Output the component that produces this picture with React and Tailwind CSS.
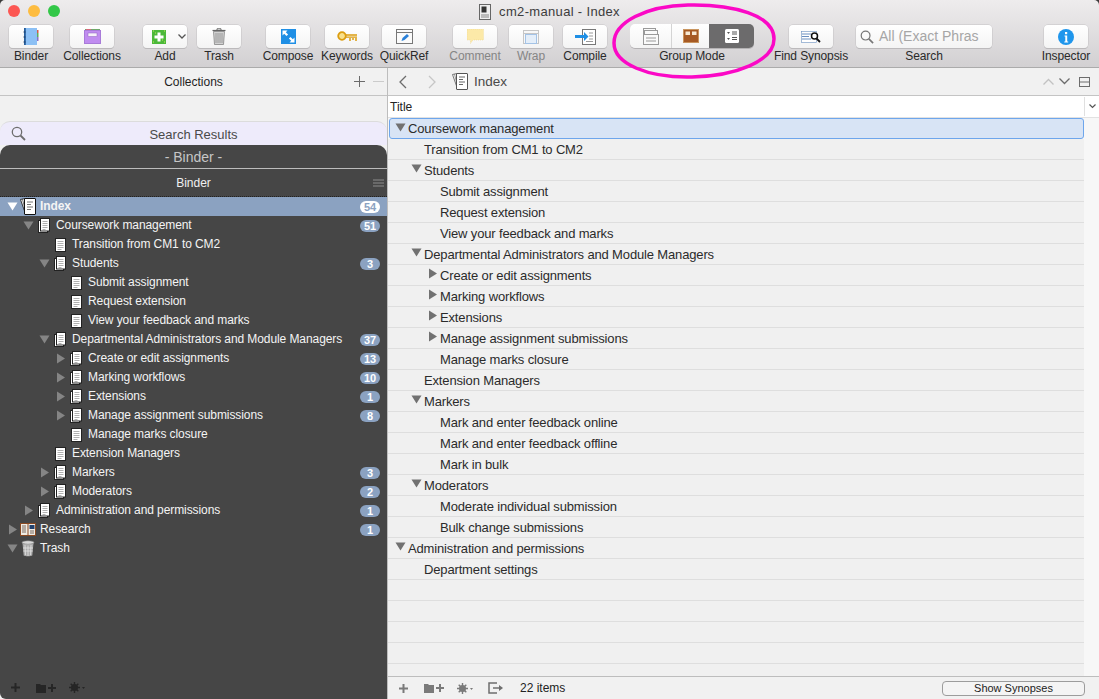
import React from 'react';

const binderRows = [
  { label: 'Index', depth: 0, arrow: 'down', icon: 'index', badge: 54, selected: true },
  { label: 'Coursework management', depth: 1, arrow: 'down', icon: 'stack', badge: 51 },
  { label: 'Transition from CM1 to CM2', depth: 2, icon: 'doc' },
  { label: 'Students', depth: 2, arrow: 'down', icon: 'stack', badge: 3 },
  { label: 'Submit assignment', depth: 3, icon: 'doc' },
  { label: 'Request extension', depth: 3, icon: 'doc' },
  { label: 'View your feedback and marks', depth: 3, icon: 'doc' },
  { label: 'Departmental Administrators and Module Managers', depth: 2, arrow: 'down', icon: 'stack', badge: 37 },
  { label: 'Create or edit assignments', depth: 3, arrow: 'right', icon: 'stack', badge: 13 },
  { label: 'Marking workflows', depth: 3, arrow: 'right', icon: 'stack', badge: 10 },
  { label: 'Extensions', depth: 3, arrow: 'right', icon: 'stack', badge: 1 },
  { label: 'Manage assignment submissions', depth: 3, arrow: 'right', icon: 'stack', badge: 8 },
  { label: 'Manage marks closure', depth: 3, icon: 'doc' },
  { label: 'Extension Managers', depth: 2, icon: 'doc' },
  { label: 'Markers', depth: 2, arrow: 'right', icon: 'stack', badge: 3 },
  { label: 'Moderators', depth: 2, arrow: 'right', icon: 'stack', badge: 2 },
  { label: 'Administration and permissions', depth: 1, arrow: 'right', icon: 'stack', badge: 1 },
  { label: 'Research', depth: 0, arrow: 'right', icon: 'research', badge: 1 },
  { label: 'Trash', depth: 0, arrow: 'down', icon: 'trash' },
];

const outlineRows = [
  { label: 'Coursework management', depth: 0, arrow: 'down', active: true },
  { label: 'Transition from CM1 to CM2', depth: 1 },
  { label: 'Students', depth: 1, arrow: 'down' },
  { label: 'Submit assignment', depth: 2 },
  { label: 'Request extension', depth: 2 },
  { label: 'View your feedback and marks', depth: 2 },
  { label: 'Departmental Administrators and Module Managers', depth: 1, arrow: 'down' },
  { label: 'Create or edit assignments', depth: 2, arrow: 'right' },
  { label: 'Marking workflows', depth: 2, arrow: 'right' },
  { label: 'Extensions', depth: 2, arrow: 'right' },
  { label: 'Manage assignment submissions', depth: 2, arrow: 'right' },
  { label: 'Manage marks closure', depth: 2 },
  { label: 'Extension Managers', depth: 1 },
  { label: 'Markers', depth: 1, arrow: 'down' },
  { label: 'Mark and enter feedback online', depth: 2 },
  { label: 'Mark and enter feedback offline', depth: 2 },
  { label: 'Mark in bulk', depth: 2 },
  { label: 'Moderators', depth: 1, arrow: 'down' },
  { label: 'Moderate individual submission', depth: 2 },
  { label: 'Bulk change submissions', depth: 2 },
  { label: 'Administration and permissions', depth: 0, arrow: 'down' },
  { label: 'Department settings', depth: 1 },
  {}, {}, {}, {}, {}, {},
];

function Arrow({ dir, color }) {
  return (
    <svg width="11" height="11" viewBox="0 0 11 11" fill={color}>
      {dir === 'down' ? <path d="M0.5 1.5h10L5.5 9.5z" /> : <path d="M2 0.5v10l8-5z" />}
    </svg>
  );
}

function DocIcon() {
  return (
    <svg width="11" height="14" viewBox="0 0 11 14">
      <rect x="0.500" y="0.500" width="10" height="13" fill="#fff" stroke="#222" />
      <path d="M2.500 3.500h6M2.500 5.500h6M2.500 7.500h6M2.500 9.500h6M2.500 11.500h4" stroke="#b0b0b0" />
    </svg>
  );
}

function StackIcon() {
  return (
    <svg width="12" height="15" viewBox="0 0 12 15">
      <rect x="0.500" y="2.500" width="9" height="12" fill="#fff" stroke="#222" />
      <rect x="2.500" y="0.500" width="9" height="12.500" fill="#fff" stroke="#222" />
      <path d="M4.500 3.500h5M4.500 5.500h5M4.500 7.500h5M4.500 9.500h5M4.500 11.500h3" stroke="#b0b0b0" />
    </svg>
  );
}

function IndexIcon({ light }) {
  const line = light ? '#666' : '#777';
  const edge = light ? '#555' : '#111';
  return (
    <svg width="16" height="17" viewBox="0 0 16 17">
      <path d="M0.500 1.500l4.500-1 3 13-3 .8z" fill="#fff" stroke={edge} strokeWidth="0.800" />
      <path d="M2.500 1.200l3 12" stroke={edge} strokeWidth="0.600" />
      <rect x="4.500" y="0.500" width="11" height="16" rx="0.500" fill="#fff" stroke={edge} />
      <path d="M7 4h6M7 6.500h4M7 9h6M7 11.500h4" stroke={line} />
    </svg>
  );
}

function ResearchIcon() {
  return (
    <svg width="16" height="13" viewBox="0 0 16 13">
      <rect x="0.500" y="0.500" width="15" height="12" fill="#f0ece4" stroke="#8a4a22" />
      <path d="M8 1v11" stroke="#8a4a22" />
      <rect x="9.500" y="2" width="5" height="4" fill="#23426e" />
      <path d="M2 3h4M2 5h4M2 7h4M2 9h4M10 8h4M10 10h4" stroke="#7a6a60" />
    </svg>
  );
}

function TrashSmall() {
  return (
    <svg width="14" height="17" viewBox="0 0 14 17">
      <ellipse cx="7" cy="2.500" rx="6" ry="1.800" fill="#d8d8d8" stroke="#777" strokeWidth="0.600" />
      <path d="M1.500 3l1.200 12.500c1 1 7.600 1 8.600 0L12.500 3c-2 1.200-9 1.200-11 0z" fill="#aaa" />
      <path d="M4 5l.5 10M7 5.500V16M10 5l-.5 10M2 8h10M2.300 11h9.400" stroke="#e4e4e4" strokeWidth="0.800" />
    </svg>
  );
}

function RowIcon({ type }) {
  if (type === 'index') return <IndexIcon />;
  if (type === 'stack') return <StackIcon />;
  if (type === 'research') return <ResearchIcon />;
  if (type === 'trash') return <TrashSmall />;
  return <DocIcon />;
}

// Small toolbar glyphs
const BinderGlyph = () => (
  <svg width="16" height="17" viewBox="0 0 16 17">
    <path d="M13 2h2.500v3H13z" fill="#d65a4a" />
    <path d="M13 5h2.500v4H13z" fill="#5fae5a" />
    <path d="M13 9h2.500v4H13z" fill="#8a70c8" />
    <rect x="1" y="0" width="13" height="17" fill="#8cc0f5" />
    <rect x="1" y="0" width="1.800" height="17" fill="#255d9c" />
    <path d="M0.500 4h2M0.500 9h2M0.500 14h2" stroke="#1c3f69" />
  </svg>
);

const CollectionsGlyph = () => (
  <svg width="17" height="15" viewBox="0 0 17 15">
    <path d="M1 0h15v2H1z" fill="#6fa86a" />
    <path d="M2 0h5v2H2z" fill="#d9687c" />
    <rect x="0.500" y="1.500" width="16" height="13" fill="#c08cf0" stroke="#a87bd8" />
    <rect x="4" y="4" width="9" height="3.500" fill="#f7f0fb" stroke="#8d62bd" strokeWidth="0.500" />
  </svg>
);

const AddGlyph = () => (
  <svg width="14" height="14" viewBox="0 0 14 14">
    <rect width="14" height="14" fill="#4cb93a" />
    <path d="M7 2.500v9M2.500 7h9" stroke="#fff" strokeWidth="3" />
    <path d="M1 1h1M12 1h1M1 12h1M12 12h1M3 3h1M10 10h1" stroke="#cfe65a" />
  </svg>
);

const TrashGlyph = () => (
  <svg width="14" height="17" viewBox="0 0 14 17">
    <path d="M0.500 2.500h13" stroke="#666" strokeWidth="1.200" />
    <path d="M5 2V0.800h4V2" fill="none" stroke="#666" />
    <path d="M1.500 3.500h11l-1 13h-9z" fill="#d2d2d2" stroke="#777" strokeWidth="0.700" />
    <path d="M4 5v10M6 5v10M8 5v10M10 5v10" stroke="#8c8c8c" strokeWidth="0.800" />
  </svg>
);

const ComposeGlyph = () => (
  <svg width="15" height="15" viewBox="0 0 15 15">
    <rect width="15" height="15" fill="#1f8fe5" />
    <path d="M1.500 1.500h5l-1.700 1.700 2.300 2.300-1.600 1.600-2.300-2.300L1.500 6.500zM13.500 13.500h-5l1.700-1.700-2.300-2.300 1.600-1.600 2.300 2.300 1.700-1.700z" fill="#fff" />
  </svg>
);

const KeyGlyph = () => (
  <svg width="21" height="11" viewBox="0 0 21 11" fill="none" stroke="#dc9d10" strokeWidth="1.800">
    <circle cx="5" cy="5" r="3.800" fill="#f9e08a" />
    <path d="M9 4h11M9 6.200h11" strokeWidth="1.300" />
    <path d="M13 7v3M16 7v2M19 7v3" strokeWidth="1.500" />
  </svg>
);

const QuickRefGlyph = () => (
  <svg width="17" height="15" viewBox="0 0 17 15">
    <rect x="0.500" y="0.500" width="16" height="14" fill="#fbfbfb" stroke="#777" />
    <path d="M0 3.500h17" stroke="#777" />
    <path d="M5.500 12l1-3 4.500-4 2 2-4.500 4z" fill="#2a80d8" />
  </svg>
);

const CommentGlyph = () => (
  <svg width="17" height="15" viewBox="0 0 17 15">
    <path d="M0 0h16.500v11H6l-2.500 3.500V11H0z" fill="#fce9a8" stroke="#ead186" strokeWidth="0.500" strokeDasharray="1 1" />
  </svg>
);

const WrapGlyph = () => (
  <svg width="16" height="14" viewBox="0 0 16 14" fill="none">
    <rect x="0.500" y="0.500" width="15" height="13" stroke="#c6c6c6" fill="#f8f8f8" />
    <path d="M0 3.500h16" stroke="#c6c6c6" />
    <rect x="2.500" y="4.500" width="11" height="9" stroke="#a4c3e6" fill="#e4eef9" />
  </svg>
);

const CompileGlyph = () => (
  <svg width="21" height="16" viewBox="0 0 21 16">
    <rect x="7.500" y="0.500" width="13" height="15" fill="#fff" stroke="#777" />
    <path d="M14 4h4M14 7h4M14 10h4M11 12.500h7" stroke="#999" />
    <path d="M0 6h9V3l4.500 4.500L9 12V9H0z" fill="#1f8fe5" />
  </svg>
);

const ScriveningsGlyph = () => (
  <svg width="16" height="17" viewBox="0 0 16 17" fill="#fafafa" stroke="#9a9a9a">
    <rect x="0.500" y="0.500" width="12" height="10" />
    <rect x="1.500" y="2.500" width="13" height="10" />
    <rect x="0.500" y="6.500" width="15" height="10" />
    <path d="M3 10h10M3 13h10" />
  </svg>
);

const CorkGlyph = () => (
  <svg width="16" height="14" viewBox="0 0 16 14">
    <rect x="0.500" y="0.500" width="15" height="13" fill="#a65a24" stroke="#c9955f" />
    <rect x="2.500" y="2.500" width="4.500" height="3.500" fill="#f7e9d3" />
    <rect x="9" y="2.500" width="4.500" height="3.500" fill="#f7e9d3" />
  </svg>
);

const OutlineGlyph = () => (
  <svg width="14" height="14" viewBox="0 0 14 14">
    <rect width="14" height="14" rx="1.500" fill="#fff" />
    <path d="M2 3h3L3.500 5zM2 9h3l-1.500 2z" fill="#555" />
    <path d="M7 3h5M7 5h5M7 8.500h5M7 10.500h5" stroke="#555" />
  </svg>
);

const FindGlyph = () => (
  <svg width="20" height="12" viewBox="0 0 20 12">
    <rect x="0.500" y="0.500" width="15" height="11" fill="#fff" stroke="#6a8fc0" strokeWidth="0.600" />
    <path d="M1 3h9M1 5.500h7M1 8h9" stroke="#6a8fc0" />
    <circle cx="13.500" cy="5" r="3" fill="#fff" stroke="#111" strokeWidth="1.500" />
    <path d="M15.500 7.500L19 11" stroke="#111" strokeWidth="1.800" />
  </svg>
);

const InfoGlyph = () => (
  <svg width="16" height="16" viewBox="0 0 16 16">
    <circle cx="8" cy="8" r="8" fill="#1f96ec" />
    <rect x="7" y="3" width="2.200" height="2.200" fill="#fff" />
    <path d="M6.500 6.500h2.700v6h1v1H6.300v-1h1V7.500h-.8z" fill="#fff" />
  </svg>
);

function Magnifier({ size = 15, color = '#6e6e6e' }) {
  return (
    <svg width={size} height={size} viewBox="0 0 15 15" fill="none" stroke={color}>
      <circle cx="6" cy="6" r="4.700" strokeWidth="1.300" />
      <path d="M9.500 9.500L14 14" strokeWidth="1.800" />
    </svg>
  );
}

function ToolItem({ label, width = 44, left = 0, muted, glyph, children }) {
  return (
    <div className="flex flex-col items-center shrink-0" style={{ width, marginLeft: left }}>
      {children || (
        <div className="w-full h-[23px] rounded-[4px] bg-gradient-to-b from-white to-[#f4f4f4] shadow-[0_0_0_0.5px_#c4c2c4,0_1px_0_#b4b2b4] flex items-center justify-center">
          {glyph}
        </div>
      )}
      <span className={`mt-[2px] text-[12px] tracking-[-0.1px] leading-[13px] whitespace-nowrap ${muted ? 'text-[#858585]' : 'text-[#2a2a2a]'}`}>
        {label}
      </span>
    </div>
  );
}

function Toolbar() {
  return (
    <div className="h-[68px] shrink-0 rounded-t-[5px] bg-gradient-to-b from-[#eeeced] to-[#d2d0d2] border-b border-[#ababab]">
      <div className="h-[25px] relative flex items-center justify-center">
        <div className="absolute left-[8px] top-[5px] flex gap-2">
          <div className="w-3 h-3 rounded-full bg-[#fc5753]" />
          <div className="w-3 h-3 rounded-full bg-[#fdbc40]" />
          <div className="w-3 h-3 rounded-full bg-[#33c748]" />
        </div>
        <div className="flex items-center gap-2 -mt-[2px]">
          <svg width="12" height="16" viewBox="0 0 12 16">
            <rect x="0.500" y="0.500" width="11" height="15" fill="#eee" stroke="#666" />
            <rect x="2.500" y="2.500" width="5" height="6" fill="#333" />
            <path d="M2 11h8M2 13h8" stroke="#888" />
          </svg>
          <span className="text-[13px] tracking-[0.33px] leading-4 text-[#3c3c3c]">cm2-manual - Index</span>
        </div>
      </div>
      <div className="flex pl-[9px]">
        <ToolItem label="Binder" glyph={<BinderGlyph />} />
        <ToolItem label="Collections" left={17} glyph={<CollectionsGlyph />} />
        <ToolItem label="Add" left={29}>
          <div className="w-full h-[23px] rounded-[4px] bg-gradient-to-b from-white to-[#f4f4f4] shadow-[0_0_0_0.5px_#c4c2c4,0_1px_0_#b4b2b4] flex items-center pl-[9px] gap-[12px]">
            <AddGlyph />
            <svg width="8" height="5" viewBox="0 0 8 5" fill="none" stroke="#555" strokeWidth="1.300">
              <path d="M0.500 0.500L4 4l3.500-3.500" />
            </svg>
          </div>
        </ToolItem>
        <ToolItem label="Trash" left={10} glyph={<TrashGlyph />} />
        <ToolItem label="Compose" left={25} glyph={<ComposeGlyph />} />
        <ToolItem label="Keywords" left={15} glyph={<KeyGlyph />} />
        <ToolItem label="QuickRef" left={13} glyph={<QuickRefGlyph />} />
        <ToolItem label="Comment" left={27} muted glyph={<CommentGlyph />} />
        <ToolItem label="Wrap" left={12} muted glyph={<WrapGlyph />} />
        <ToolItem label="Compile" left={10} glyph={<CompileGlyph />} />
        <ToolItem label="Group Mode" width={124} left={23}>
          <div className="w-full h-[24px] -mt-[1px] rounded-[5px] overflow-hidden flex shadow-[0_1px_0_#b4b2b4]">
            <div className="w-[42px] bg-gradient-to-b from-white to-[#f4f4f4] border-r border-[#d4d4d4] flex items-center justify-center"><ScriveningsGlyph /></div>
            <div className="w-[37px] bg-gradient-to-b from-white to-[#f4f4f4] flex items-center justify-center"><CorkGlyph /></div>
            <div className="w-[45px] bg-[#6c6b6c] flex items-center justify-center"><OutlineGlyph /></div>
          </div>
        </ToolItem>
        <ToolItem label="Find Synopsis" left={35} glyph={<FindGlyph />} />
        <ToolItem label="Search" width={136} left={23}>
          <div className="w-full h-[23px] rounded-[4px] bg-gradient-to-b from-white to-[#f4f4f4] shadow-[0_0_0_0.5px_#c4c2c4,0_1px_0_#b4b2b4] flex items-center pl-[4px] gap-[5px]">
            <Magnifier size={14} color="#777" />
            <span className="text-[14px] text-[#a6a6a6] whitespace-nowrap">All (Exact Phras</span>
          </div>
        </ToolItem>
        <ToolItem label="Inspector" left={52} glyph={<InfoGlyph />} />
      </div>
    </div>
  );
}

function FooterTools({ color }) {
  return (
    <div className="flex items-center">
      <svg width="9" height="9" viewBox="0 0 9 9" fill={color}><path d="M3.500 0h2v3.500H9v2H5.500V9h-2V5.500H0v-2h3.500z" /></svg>
      <svg className="ml-[16px]" width="21" height="10" viewBox="0 0 21 10" fill={color}>
        <path d="M0 1h4l1 1h5v8H0zM12 4h3V1h2v3h3v2h-3v3h-2V6h-3z" />
      </svg>
      <svg className="ml-[12px]" width="17" height="11" viewBox="0 0 17 11" fill={color}>
        <circle cx="5.500" cy="5.500" r="3.500" />
        <path d="M5.500 0v11M0 5.500h11M1.700 1.700l7.600 7.600M9.300 1.700l-7.600 7.600" stroke={color} strokeWidth="1.400" />
        <path d="M13 5h3l-1.500 2z" />
      </svg>
    </div>
  );
}

function BinderPanel() {
  return (
    <div className="w-[388px] shrink-0 flex flex-col border-r border-[#bdbdbd] bg-[#f1f1f1]">
      <div className="relative h-[28px] shrink-0 border-b border-[#c4c4c4] flex items-center justify-center">
        <span className="text-[12px] text-[#1f1f1f]">Collections</span>
        <div className="absolute right-[3px] top-[8px] flex items-center gap-[8px]">
          <svg width="11" height="11" viewBox="0 0 11 11" stroke="#6b6b6b"><path d="M5.500 0v11M0 5.500h11" /></svg>
          <svg width="11" height="11" viewBox="0 0 11 11" stroke="#cbcbcb"><path d="M0 5.500h11" /></svg>
        </div>
      </div>
      <div className="h-[25px] shrink-0" />
      <div className="relative h-[24px] shrink-0 rounded-t-[10px] bg-[#eeebfb] border-t border-[#dcdcdc] flex items-center justify-center">
        <div className="absolute left-[11px] top-[4px]"><Magnifier size={15} /></div>
        <span className="text-[13px] text-[#4a4a4a] mt-[3px]">Search Results</span>
      </div>
      <div className="flex-1 flex flex-col rounded-t-[10px] rounded-bl-[6px] bg-[#464646] min-h-0">
        <div className="h-[23px] shrink-0 flex items-center justify-center border-b border-[#bcbcbc] box-content">
          <span className="text-[14px] mt-[1px] text-[#c6c6c6]">- Binder -</span>
        </div>
        <div className="relative h-[28px] shrink-0 flex items-center justify-center border-b border-dotted border-[#222]">
          <span className="text-[12px] mt-[1px] text-[#f0f0f0]">Binder</span>
          <svg className="absolute right-[3px] top-[10px]" width="11" height="9" viewBox="0 0 11 9" stroke="#8c8c8c">
            <path d="M0 1h11M0 4h11M0 7h11" />
          </svg>
        </div>
        <div className="flex-1 min-h-0">
          {binderRows.map((row) => (
            <div
              key={row.label}
              className={`h-[19px] flex items-center relative ${row.selected ? 'bg-[#8ba2c1]' : ''}`}
              style={{ paddingLeft: 7 + row.depth * 16 }}
            >
              <div className="w-[11px] shrink-0 flex items-center">
                {row.arrow && <Arrow dir={row.arrow} color={row.selected ? '#ffffff' : '#858585'} />}
              </div>
              <div className="w-[20px] shrink-0 flex justify-center">
                <RowIcon type={row.icon} />
              </div>
              <span className={`ml-[2px] -mt-[2px] text-[12px] tracking-[-0.085px] leading-4 whitespace-nowrap text-[#f4f4f4] ${row.selected ? 'font-bold' : ''}`}>
                {row.label}
              </span>
              {row.badge !== undefined && (
                <span className={`absolute right-[7px] top-[4px] w-[20px] h-[12px] rounded-full text-[11px] leading-[12px] font-bold text-center ${row.selected ? 'bg-white text-[#8ba2c1]' : 'bg-[#8ba2c1] text-white'}`}>
                  {row.badge}
                </span>
              )}
            </div>
          ))}
        </div>
        <div className="h-[23px] shrink-0 pl-[11px] flex items-center"><FooterTools color="#262626" /></div>
      </div>
    </div>
  );
}

function OutlinePanel() {
  return (
    <div className="flex-1 min-w-0 flex flex-col bg-[#f7f7f7]">
      <div className="h-[28px] shrink-0 bg-[#f1f1f1] border-b border-[#c4c4c4] flex items-center pl-[10px] pr-[9px]">
        <svg width="9" height="14" viewBox="0 0 9 14" fill="none" stroke="#6c6c6c" strokeWidth="1.300"><path d="M8 1L2 7l6 6" /></svg>
        <svg className="ml-[21px]" width="9" height="14" viewBox="0 0 9 14" fill="none" stroke="#c6c6c6" strokeWidth="1.300"><path d="M1 1l6 6-6 6" /></svg>
        <div className="ml-[15px]"><IndexIcon light /></div>
        <span className="ml-[6px] mt-[1px] text-[13.5px] text-[#4a4a4a]">Index</span>
        <div className="ml-auto flex items-center gap-[5px]">
          <svg width="11" height="7" viewBox="0 0 11 7" fill="none" stroke="#c2c2c2" strokeWidth="1.300"><path d="M0.500 6.500l5-5 5 5" /></svg>
          <svg width="11" height="7" viewBox="0 0 11 7" fill="none" stroke="#6c6c6c" strokeWidth="1.300"><path d="M0.500 0.500l5 5 5-5" /></svg>
          <svg className="ml-[4px]" width="11" height="10" viewBox="0 0 11 10" fill="none" stroke="#6c6c6c"><rect x="0.500" y="0.500" width="10" height="9" /><path d="M0 5h11" /></svg>
        </div>
      </div>
      <div className="h-[22px] shrink-0 bg-white border-b border-[#e2e2e2] flex items-center justify-between pl-[2px]">
        <span className="text-[12px] text-[#222]">Title</span>
        <div className="w-[15px] h-[19px] border-l border-[#e0e0e0] flex items-center justify-center">
          <svg width="7" height="5" viewBox="0 0 7 5" fill="none" stroke="#555" strokeWidth="1.200"><path d="M0.500 0.500l3 3 3-3" /></svg>
        </div>
      </div>
      <div className="flex-1 min-h-0 overflow-hidden">
        {outlineRows.map((row, i) => (
          <div
            key={i}
            className={`h-[21px] flex ${row.active ? 'w-[695px] ml-[1px] bg-[#d8e4f5] border border-[#6ea6ec] rounded-[3px]' : 'w-[696px] bg-[#f0f0f0] border-b border-[#dedede]'}`}
            style={{ paddingLeft: (row.active ? 5 : 7) + (row.depth || 0) * 16 }}
          >
            <div className="w-[13px] shrink-0 pt-[3px]">
              {row.arrow && <Arrow dir={row.arrow} color="#717171" />}
            </div>
            <span className={`text-[13px] tracking-[-0.15px] whitespace-nowrap text-[#2b2b2b] ${row.active ? 'leading-[20px]' : 'leading-[22px]'}`}>{row.label}</span>
          </div>
        ))}
      </div>
      <div className="h-[23px] shrink-0 bg-[#f1f1f1] border-t border-[#bdbdbd] flex items-center pl-[11px] pr-[14px]">
        <FooterTools color="#7a7a7a" />
        <svg className="ml-[14px]" width="16" height="12" viewBox="0 0 16 12" fill="none" stroke="#6e6e6e" strokeWidth="1.500">
          <path d="M9 1H1v10h8" />
          <path d="M5 6h8" />
          <path d="M11 3l4 3-4 3z" fill="#6e6e6e" stroke="none" />
        </svg>
        <span className="ml-[16px] text-[12px] text-[#222]">22 items</span>
        <button className="ml-auto w-[143px] h-[15px] rounded-[4px] border border-[#9c9c9c] bg-[#f4f4f4] text-[11px] leading-[13px] text-[#222]">
          Show Synopses
        </button>
      </div>
    </div>
  );
}

export default function App() {
  return (
    <div className="relative w-[1099px] h-[699px] overflow-hidden flex flex-col bg-[#3a3a3a] font-['Liberation_Sans',Arial,sans-serif]">
      <Toolbar />
      <div className="flex-1 min-h-0 flex">
        <BinderPanel />
        <OutlinePanel />
      </div>
      {/* hand-drawn annotation round the group mode control */}
      <svg className="absolute left-[610px] top-0 pointer-events-none" width="170" height="84" viewBox="0 0 170 84" fill="none">
        <path
          d="M4 43C4 22 36 6 78 5c45-1 86 10 86 34 0 22-38 37-82 38C38 78 4 64 4 43z"
          stroke="#fb08c6"
          strokeWidth="3.500"
        />
      </svg>
    </div>
  );
}
